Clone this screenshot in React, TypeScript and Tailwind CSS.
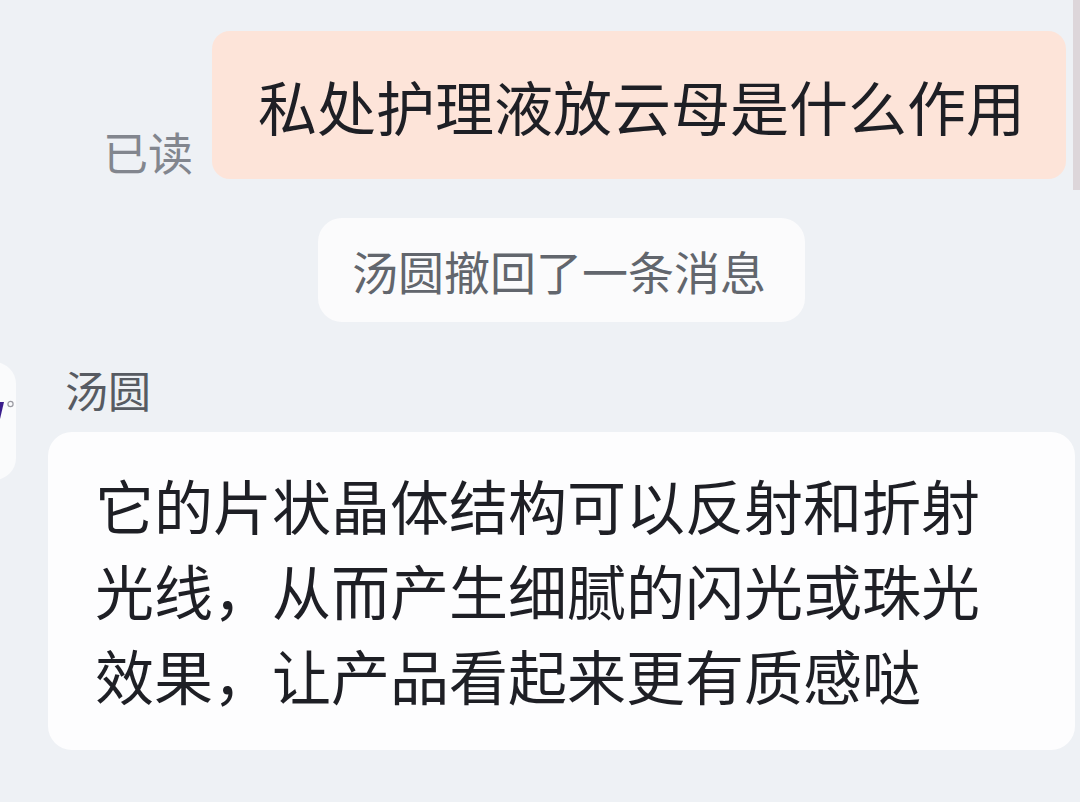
const FONT = "font-['Noto_Sans_CJK_SC','Noto_Sans',sans-serif]"

const ANSWER_LINES = [
  '它的片状晶体结构可以反射和折射',
  '光线，从而产生细腻的闪光或珠光',
  '效果，让产品看起来更有质感哒',
]

function AvatarEdge() {
  return (
    <div className="ml-[-100px] w-[116px] h-[118px] shrink-0 rounded-[22px] bg-[#fafbfc] flex items-center justify-end pr-[1px] pb-[22px]">
      <svg width="17" height="22" viewBox="0 0 17 22">
        <path d="M0 3 L6 3 L2 20 L-4 20 Z" fill="#3a1d8c" />
        <circle cx="12.5" cy="5" r="2.6" fill="none" stroke="#9a9aa2" strokeWidth="1.2" />
      </svg>
    </div>
  )
}

export default function App() {
  return (
    <div className={`${FONT} w-[1080px] h-[802px] overflow-hidden bg-[#eef1f5] flex flex-col`}>
      <div className="flex justify-end items-start">
        <div className="mt-[31px] flex items-end gap-[19px]">
          <span className="mb-[5px] text-[45px] leading-[45px] text-[#82868e]">已读</span>
          <div className="h-[148px] rounded-[18px] bg-[#fde4d9] pl-[46px] pr-[41px] flex items-center">
            <span className="text-[59px] leading-[59px] text-[#1e1f25] whitespace-nowrap">私处护理液放云母是什么作用</span>
          </div>
        </div>
        <div className="ml-[7px] w-[7px] h-[190px] bg-[#ddd6da]"></div>
      </div>

      <div className="ml-[318px] mt-[28px] w-[487px] h-[104px] rounded-[24px] bg-[#fbfbfc] pl-[34px] flex items-center">
        <span className="text-[46px] leading-[46px] text-[#62666d] whitespace-nowrap">汤圆撤回了一条消息</span>
      </div>

      <div className="mt-[40px] flex items-start">
        <AvatarEdge />
        <div className="ml-[32px] flex flex-col">
          <div className="mt-[6px] pl-[17px] text-[43px] leading-[43px] text-[#575b62]">汤圆</div>
          <div className="mt-[21px] w-[1027px] h-[318px] rounded-[24px] bg-[#fdfdfe] pl-[47px] pt-[30px]">
            {ANSWER_LINES.map(line => (
              <div key={line} className="text-[59px] leading-[85px] text-[#1e1f25] whitespace-nowrap">
                {line}
              </div>
            ))}
          </div>
        </div>
      </div>
    </div>
  )
}
